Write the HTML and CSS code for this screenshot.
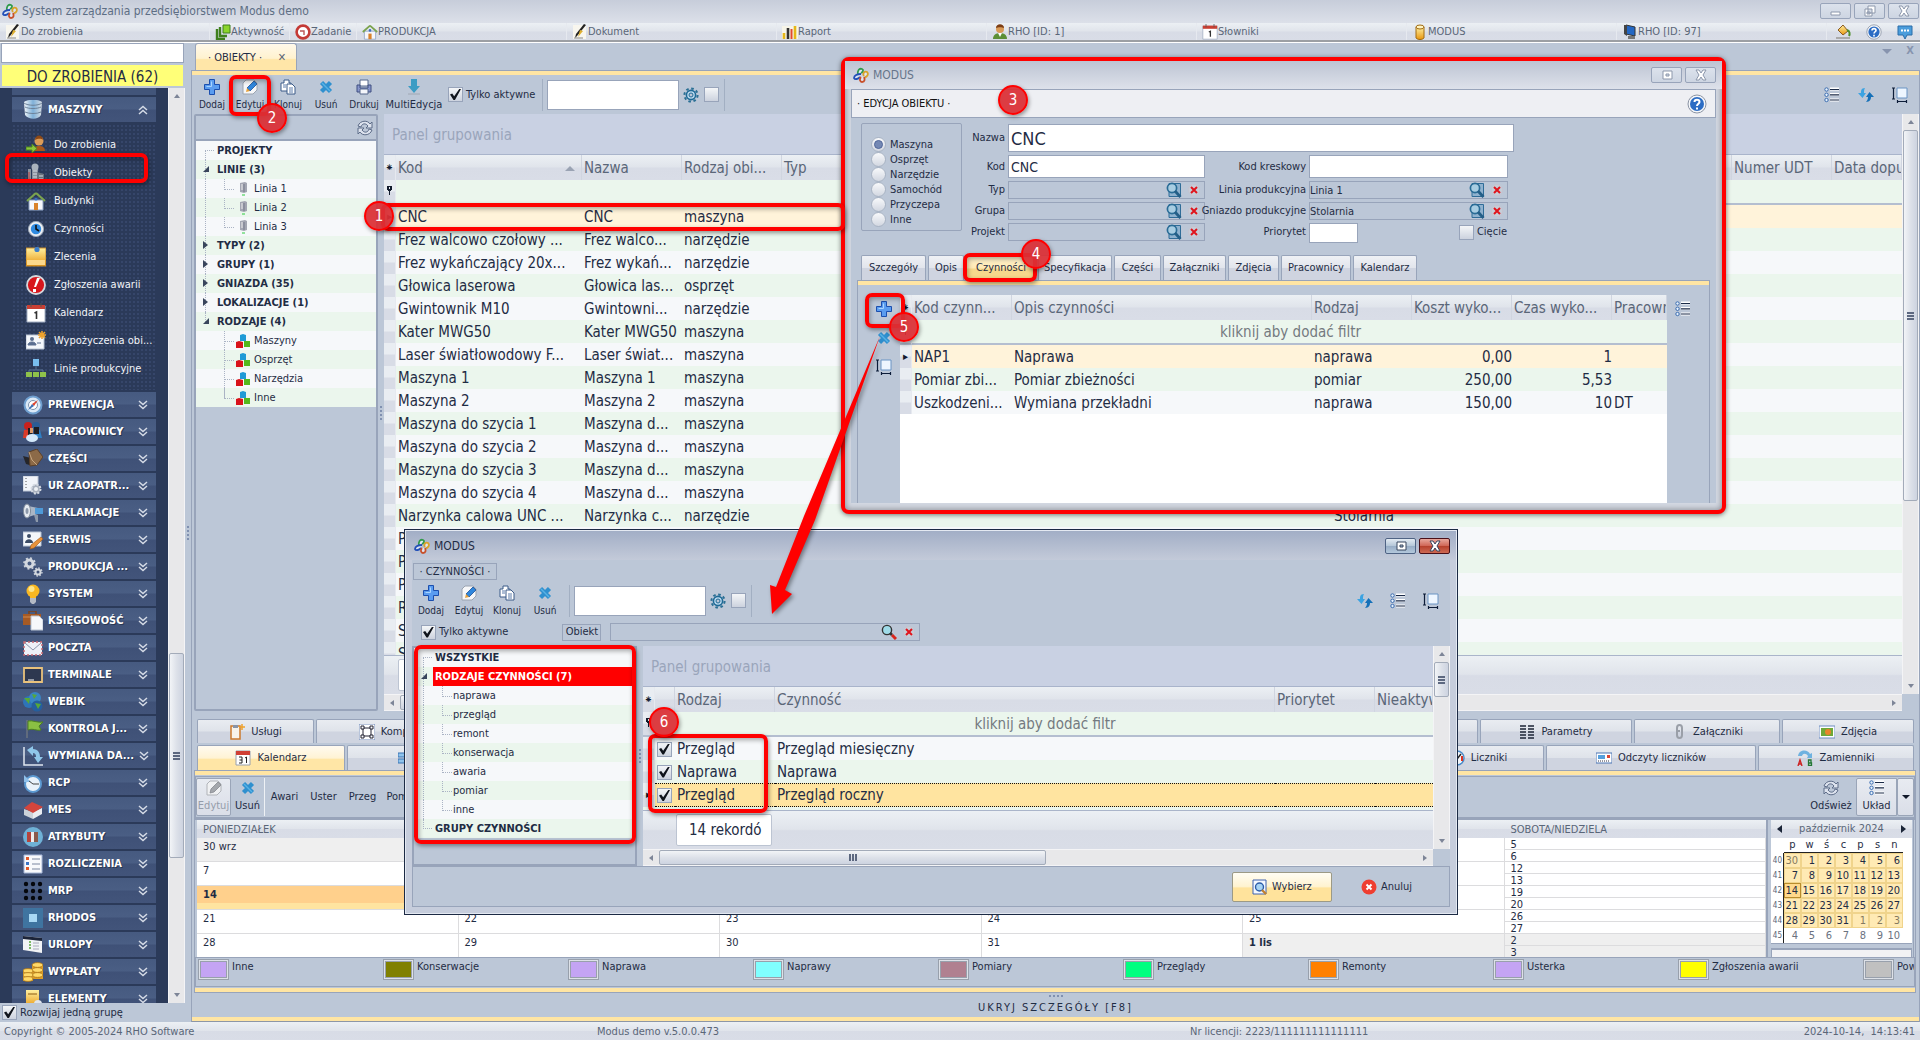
FILE: index.html
```html
<!DOCTYPE html>
<html lang="pl">
<head>
<meta charset="utf-8">
<title>System zarządzania przedsiębiorstwem Modus demo</title>
<link rel="stylesheet" href="styles.css">
</head>
<body>
<svg class="defs" aria-hidden="true">
  <defs>
    <linearGradient id="gSilver" x1="0" y1="0" x2="1" y2="1"><stop offset="0" stop-color="#fff"/><stop offset="1" stop-color="#b4bcc9"/></linearGradient>
    <linearGradient id="gGold" x1="0" y1="0" x2="0" y2="1"><stop offset="0" stop-color="#fff0a0"/><stop offset="1" stop-color="#e8960f"/></linearGradient>
    <linearGradient id="gTank" x1="0" y1="0" x2="1" y2="0"><stop offset="0" stop-color="#f2f6fa"/><stop offset=".5" stop-color="#7fb0d8"/><stop offset="1" stop-color="#d6dde4"/></linearGradient>
  </defs>
  <symbol id="logo" viewBox="0 0 16 16"><g fill="#dfe6f2" stroke-width="1.800"><path d="M5 8 C4 4 6 1 9 2 C11 3 10 5 8 6" stroke="#2f9a4a"/><path d="M11 9 C9 6 12 4 14 5 C16 7 14 10 12 10" stroke="#d9a32a"/><path d="M8 7 C5 7 1 8 1 11 C2 13 5 12 7 10" stroke="#2350b8"/><path d="M8 10 C6 12 7 15 9 15 C12 15 12 12 11 10" stroke="#c8502a"/></g></symbol>
  <symbol id="pen" viewBox="0 0 16 16"><path d="M1 1h13v14H1z" fill="#f8f6ee"/><path d="M14 1L5 12l-2 2 1-4L12 0z" fill="#222"/><path d="M8 6l3 1-5 6z" fill="#e0b030"/><path d="M2 14h9" stroke="#888"/></symbol>
  <symbol id="activity" viewBox="0 0 16 16"><path d="M2 5v10h8M5 3v9h7" fill="none" stroke="#3f7f1e" stroke-width="2.400"/><path d="M8 1h7v8H8z" fill="#8bd52c" stroke="#3f7f1e"/></symbol>
  <symbol id="task" viewBox="0 0 16 16"><circle cx="8" cy="8" r="6.400" fill="#fff" stroke="#c43a36" stroke-width="2.600"/><path d="M5 7h4v4" fill="none" stroke="#b55" stroke-width="1.400"/></symbol>
  <symbol id="house" viewBox="0 0 20 20"><path d="M3 9h14v10H3z" fill="#f6f7fb" stroke="#8fa3c4"/><path d="M10 2L1 10M10 2l9 8" stroke="#7ba34e" stroke-width="2.200" fill="none"/><path d="M8 12h4v7H8z" fill="#d9822b"/><circle cx="10" cy="8" r="1.600" fill="#3c6fc0"/></symbol>
  <symbol id="report" viewBox="0 0 16 16"><path d="M0 2h16v13H0z" fill="#f7f5e8"/><path d="M2 15V9M13 15V2" stroke="#e5b718" stroke-width="2.600"/><path d="M6 15V4" stroke="#333" stroke-width="2.600"/><path d="M9.500 15V5" stroke="#e2492f" stroke-width="2"/></symbol>
  <symbol id="user" viewBox="0 0 16 16"><circle cx="8" cy="5" r="4" fill="#d99a56"/><path d="M4 4c0-5 8-5 8 0-2-1-6-1-8 0z" fill="#7c3d14"/><path d="M1 15c0-4 3-6 7-6s7 2 7 6z" fill="#5c8f35"/><path d="M6 9l2 4 2-4z" fill="#fff"/></symbol>
  <symbol id="cal1" viewBox="0 0 20 20"><path d="M1 3h18v16H1z" fill="#fff" stroke="#a4b0c4"/><path d="M1 2h18v4H1z" fill="#c93f33"/><path d="M5 0v4M15 0v4" stroke="#555"/><path d="M8.500 10l2-1v7" stroke="#333" stroke-width="1.600" fill="none"/></symbol>
  <symbol id="db" viewBox="0 0 16 16"><path d="M4 3h8v11c-2 2-6 2-8 0z" fill="url(#gGold)" stroke="#a06a12"/><ellipse cx="8" cy="3" rx="4" ry="2" fill="#fff3c0" stroke="#a06a12"/></symbol>
  <symbol id="pc" viewBox="0 0 16 16"><path d="M4 1l9 2v9L4 10z" fill="#2367c4" stroke="#333"/><path d="M2 1l3 0v11l-3-2z" fill="#444"/><path d="M6 12h7v3H6z" fill="#777"/></symbol>
  <symbol id="paint" viewBox="0 0 16 16"><path d="M3 6l5-5 5 6-5 4z" fill="url(#gGold)" stroke="#8a5a20"/><path d="M12 6c3 1 3 4 2 6" stroke="#4f8f2c" stroke-width="2" fill="none"/><path d="M1 14h14" stroke="#aaa" stroke-width="2"/></symbol>
  <symbol id="help" viewBox="0 0 20 20"><circle cx="10" cy="10" r="9" fill="#f5f7fa" stroke="#8a93a3"/><circle cx="10" cy="10" r="7" fill="#2b6cc4"/><path d="M7.500 8c0-3 5-3 5 0 0 1.500-2.500 2-2.500 4M10 13.500v2" stroke="#fff" stroke-width="2" fill="none"/></symbol>
  <symbol id="chat" viewBox="0 0 16 16"><path d="M1 2h14v9h-5l-2 4-2-4H1z" fill="#4b9ddc" stroke="#2b6ca8"/><path d="M4 6.500h2M7 6.500h2M10 6.500h2" stroke="#fff" stroke-width="2"/></symbol>
  <symbol id="plus" viewBox="0 0 16 16"><path d="M5.500 .500h5v5h5v5h-5v5h-5v-5h-5v-5h5z" fill="#5a9cf0" stroke="#1c4fae"/><path d="M7.500 2.500v5H2.500" stroke="#a8d4ff" fill="none"/></symbol>
  <symbol id="edit" viewBox="0 0 16 16"><path d="M4 1h8l3 3v7l-4 4H1V4z" fill="#f6f7f9" stroke="#9aa3b0"/><path d="M12 2l3 3-7 7-3-3z" fill="#2f86dc" stroke="#1c4f94" stroke-width=".8"/><path d="M5 9l3 3-4 1z" fill="#e8a23a"/></symbol>
  <symbol id="editoff" viewBox="0 0 16 16"><path d="M4 1h8l3 3v7l-4 4H1V4z" fill="#f0f1f3" stroke="#b0b3b8"/><path d="M12 2l3 3-7 7-4 1 1-4z" fill="#a4a7ac" stroke="#85888e" stroke-width=".8"/></symbol>
  <symbol id="clone" viewBox="0 0 16 16"><path d="M1 4h3V1h5v3h2v8H1z" fill="#fff" stroke="#3a5a88"/><path d="M7 5h5l3 3v7H7z" fill="#fff" stroke="#3a5a88"/><path d="M9 9h4M9 11h4M9 13h4M3 6h3M3 8h3" stroke="#5c7cab"/></symbol>
  <symbol id="del" viewBox="0 0 16 16"><path d="M3.500 3.500l9 9M12.500 3.500l-9 9" stroke="#2f90cf" stroke-width="4.400"/><path d="M4 4l8 8" stroke="#58b2e6" stroke-width="1.500"/></symbol>
  <symbol id="print" viewBox="0 0 16 16"><path d="M4 1h8v6H4z" fill="#fff" stroke="#56688c"/><path d="M1 6h3v3h8V6h3v7H1z" fill="#8796cc" stroke="#3e4f80"/><path d="M4 10h8v5H4z" fill="#f4f6fb" stroke="#56688c"/></symbol>
  <symbol id="down" viewBox="0 0 16 16"><path d="M5 0h6v7h3l-6 7-6-7h3z" fill="#3c9cc4"/><path d="M2 15h12" stroke="#a0a8b4"/></symbol>
  <symbol id="gear" viewBox="0 0 16 16"><circle cx="8" cy="8" r="6.600" fill="none" stroke="#2a6f94" stroke-width="2" stroke-dasharray="2.600 2.580"/><circle cx="8" cy="8" r="4.600" fill="#bbd9ee" stroke="#1f6a96" stroke-width="1.600"/><circle cx="8" cy="8" r="2" fill="#bcc7d7" stroke="#1f6a96"/></symbol>
  <symbol id="list" viewBox="0 0 16 16"><path d="M6 2h9M6 7.500h9M6 13h9" stroke="#fff" stroke-width="3"/><g fill="#e8f2fc" stroke="#3a6cb0"><circle cx="2.500" cy="2.500" r="1.700"/><circle cx="2.500" cy="7.800" r="1.700"/><circle cx="2.500" cy="13" r="1.700"/></g><path d="M6 2.500h9M6 7.800h9M6 13h9" stroke="#1b2b48" stroke-width="1.200"/></symbol>
  <symbol id="sync" viewBox="0 0 16 16"><path d="M7 1C3 1 3 4 3 6H0l4.500 5L8 6H6c0-2 0-3 1-5z" fill="#3ba3e2"/><path d="M8 15c4 0 5-3 5-5h3l-4.500-5L8 10h2c0 2-1 4-2 5z" fill="#1570b8"/></symbol>
  <symbol id="size" viewBox="0 0 16 16"><path d="M5 1h10v10H5z" fill="#eef6ff" stroke="#6a94c4"/><path d="M0 1h3M1.500 1v11M0 12h3M5 14.500h10M5.500 13v3M14.500 13v3" stroke="#0c1c38" stroke-width="1.200"/></symbol>
  <symbol id="refresh" viewBox="0 0 16 16"><path d="M1 6c2-6 10-6 12-2l2-2v6H9l2-2C9 3 5 3 4 7z" fill="#dde3ee" stroke="#5d6c88"/><path d="M15 10c-2 6-10 6-12 2l-2 2V8h6l-2 2c2 3 6 3 7-1z" fill="#dde3ee" stroke="#5d6c88"/></symbol>
  <symbol id="lens" viewBox="0 0 16 16"><path d="M3 1.500h11.500v13H3z" fill="#8fb2cf" stroke="#2f6c98"/><circle cx="6" cy="6" r="4.600" fill="#a8cde2" stroke="#2a6c96" stroke-width="1.700"/><path d="M9 9l5.500 6" stroke="#245f88" stroke-width="2.800"/></symbol>
  <symbol id="lensred" viewBox="0 0 16 16"><circle cx="6" cy="6" r="4.600" fill="#9fdbe8" stroke="#333" stroke-width="1.400"/><path d="M9 9l2 2" stroke="#333" stroke-width="2.600"/><path d="M11 11l4 4" stroke="#d9261c" stroke-width="3"/></symbol>
  <symbol id="redx" viewBox="0 0 12 12"><circle cx="6" cy="6" r="5.500" fill="#c6ced9" stroke="#c9c0c8" stroke-width=".6"/><path d="M3 3l6 6M9 3L3 9" stroke="#e0141c" stroke-width="2"/></symbol>
  <symbol id="tower" viewBox="0 0 12 14"><path d="M3 1l5-1 2 1v9l-3 1-4-1z" fill="#a3a6b2"/><path d="M7 2v8" stroke="#74788a"/><path d="M4 3h2M4 5h2M4 7h2" stroke="#eee"/><path d="M5 13h3" stroke="#2ecc40"/></symbol>
  <symbol id="cubes" viewBox="0 0 14 14"><path d="M4 1l3-1 3 1v6H4z" fill="#1f9ad6"/><path d="M0 8l3-1 4 1v6H0z" fill="#d9121a"/><path d="M8 7h6v6H8z" fill="#55b81c"/></symbol>
  <symbol id="chevd" viewBox="0 0 10 10"><path d="M1 1l4 3.500L9 1M1 5l4 3.500L9 5" fill="none" stroke="#d5dbe6" stroke-width="1.500"/></symbol>
  <symbol id="chevu" viewBox="0 0 10 10"><path d="M1 5l4-3.500L9 5M1 9l4-3.500L9 9" fill="none" stroke="#d5dbe6" stroke-width="1.500"/></symbol>

  <symbol id="tank" viewBox="0 0 20 20"><path d="M1 2c4-3 14-3 18 0l-1 13c-3 5-12 5-16 0z" fill="url(#gTank)"/><path d="M1 3c4 3 14 3 18 0M2 7c4 2 12 2 16 0M2 12c4 2 12 2 16 0" stroke="#6d8299" fill="none"/></symbol>
  <symbol id="userarrow" viewBox="0 0 20 20"><circle cx="13" cy="6" r="4.500" fill="#dc9c58"/><path d="M9 5c0-6 8-6 8 0-2-2-6-1-8 0z" fill="#8c4816"/><path d="M7 16c0-4 3-5 6-5s6 1 6 5z" fill="#a8581c"/><path d="M0 12h6V9l5 4.500-5 4.500v-3H0z" fill="#8cc63c" stroke="#4f8a1e"/></symbol>
  <symbol id="plant" viewBox="0 0 20 20"><path d="M2 6h3v12H2zM6 3h6v15H6z" fill="#8b939e"/><path d="M11 9l7 2v7h-7z" fill="#6a737e"/><circle cx="9" cy="4" r="3.500" fill="#aab3bd"/><path d="M7 8h4M7 11h4M7 14h4M13 13h4M13 16h4" stroke="#d6dde6"/><path d="M3 9v8" stroke="#b44"/></symbol>
  <symbol id="clock" viewBox="0 0 20 20"><circle cx="10" cy="10" r="7.600" fill="#e9edf2" stroke="#9aa5b4"/><circle cx="10" cy="10" r="5.200" fill="#2e8ae0"/><path d="M10 6v4l3 2" stroke="#111" stroke-width="1.600" fill="none"/></symbol>
  <symbol id="note" viewBox="0 0 20 20"><path d="M0 1h20v18H0z" fill="url(#gGold)" stroke="#c58a2c"/><path d="M1 13h18v5H1z" fill="#fbd88c"/><circle cx="11" cy="2.500" r="2.600" fill="#3f7fc8"/></symbol>
  <symbol id="alarm" viewBox="0 0 20 20"><circle cx="10" cy="10" r="9" fill="#d8161c" stroke="#d5d8dd" stroke-width="1.800"/><path d="M11 3l3 0-4 9H8zM7 14h3v3H7z" fill="#fff"/></symbol>
  <symbol id="card" viewBox="0 0 20 20"><path d="M0 4h18v14H0z" fill="#f4f7fb" stroke="#b9c4d4"/><circle cx="6" cy="8" r="2" fill="#5b6f90"/><path d="M2 14c0-4 8-4 8 0zM11 12h4" fill="#5b6f90" stroke="#5b6f90"/><path d="M16 0v8M12 4h8M13 1l6 6M19 1l-6 6" stroke="#eea22c" stroke-width="1.600"/></symbol>
  <symbol id="orgline" viewBox="0 0 20 20"><path d="M7 0h6v7H7z" fill="#79bff0"/><path d="M10 7v4M3 13v-2h14v2" stroke="#5a7596" fill="none"/><path d="M0 13h6v5H0zM7 13h6v5H7zM14 13h6v5h-6z" fill="#8fc24a"/></symbol>
  <symbol id="compass" viewBox="0 0 20 20"><circle cx="10" cy="10" r="8.500" fill="#dbe9f7" stroke="#6f9fcf" stroke-width="2"/><circle cx="10" cy="10" r="4.500" fill="#fff" stroke="#7d93ae"/><path d="M15 5l-4 6-2-2z" fill="#e2432b"/><path d="M5 15l4-6 2 2z" fill="#3a6fb4"/></symbol>
  <symbol id="people" viewBox="0 0 20 20"><circle cx="5" cy="4" r="4" fill="#c8201c"/><circle cx="13" cy="4" r="4" fill="#2b5c94"/><path d="M1 8h7v8H0z" fill="#d93a28"/><path d="M11 8h6l2 8h-8z" fill="#2f7fc4"/><path d="M5 6h4v7H5zM11 5h5v7h-5z" fill="#1c1c20"/><path d="M7 6h3v5H7z" fill="#d99a6a"/><ellipse cx="9" cy="16" rx="6" ry="4" fill="#d4e9fa"/></symbol>
  <symbol id="box" viewBox="0 0 20 20"><path d="M0 7l8 2 2 8-7-2z" fill="#26262a"/><path d="M6 3l8-3 6 8-6 8-7 1z" fill="#8c6a48" stroke="#5d4128"/><path d="M6 3l3 8 5 5" stroke="#c5a580" fill="none"/></symbol>
  <symbol id="docgear" viewBox="0 0 20 20"><path d="M0 0h15v15H0z" fill="#f1f4f9" stroke="#bdc6d5"/><path d="M3 2v10" stroke="#555" stroke-dasharray="1 2"/><circle cx="13" cy="13" r="4.500" fill="#a9b1be" stroke="#d5dae2" stroke-width="2" stroke-dasharray="2 1.500"/><circle cx="13" cy="13" r="2" fill="#eef1f5"/></symbol>
  <symbol id="horn" viewBox="0 0 20 20"><path d="M5 3l10 2v6L5 14z" fill="#aab6c5"/><ellipse cx="4" cy="8" rx="3.500" ry="7" fill="#e6ebf1" stroke="#7f8a99"/><ellipse cx="4" cy="8" rx="1.500" ry="3" fill="#8d99aa"/><path d="M12 5h8v6h-8z" fill="#4e9ad8"/><path d="M11 12h4v7h-2z" fill="#8d99aa"/></symbol>
  <symbol id="cardpen" viewBox="0 0 20 20"><path d="M0 2h18v14H0z" fill="#f4f7fb" stroke="#b9c4d4"/><circle cx="6" cy="6" r="2" fill="#3c4c66"/><path d="M2 13c0-5 8-5 8 0z" fill="#3c4c66"/><path d="M18 7l2 2-9 9-4 1 1-4z" fill="#e8923a" stroke="#9a5518" stroke-width=".6"/></symbol>
  <symbol id="gears" viewBox="0 0 20 20"><circle cx="6.500" cy="6.500" r="3.500" fill="none" stroke="#d3d8df" stroke-width="3"/><circle cx="6.500" cy="6.500" r="5.500" fill="none" stroke="#d3d8df" stroke-width="1.600" stroke-dasharray="2 2.300"/><circle cx="15" cy="15" r="2.500" fill="none" stroke="#d3d8df" stroke-width="2"/><circle cx="15" cy="15" r="4" fill="none" stroke="#d3d8df" stroke-width="1.300" stroke-dasharray="1.600 1.500"/></symbol>
  <symbol id="bulb" viewBox="0 0 20 20"><circle cx="10" cy="7" r="6.500" fill="#f9b822"/><circle cx="8.500" cy="5" r="3" fill="#fde58a"/><path d="M7 12h6v2H7z" fill="#f9b822"/><path d="M7 14h6v4l-2 2H9l-2-2z" fill="#b4bac4"/></symbol>
  <symbol id="case" viewBox="0 0 20 20"><path d="M6 3V0h7v3" stroke="#7c431c" fill="none" stroke-width="1.500"/><path d="M0 3h18v11H0z" fill="#a65a24"/><path d="M0 6h18" stroke="#d08a4c"/><path d="M8 5h8l4 4v10H8z" fill="#f6f8fb" stroke="#b9c3d1"/></symbol>
  <symbol id="mail" viewBox="0 0 20 20"><path d="M1 4h18v13H1z" fill="#eef1f8" stroke="#c86a72" stroke-width="1.500" stroke-dasharray="2 2"/><path d="M2 5l8 7 8-7" fill="none" stroke="#8c96ac"/></symbol>
  <symbol id="board" viewBox="0 0 20 20"><path d="M1 3h18v14H1z" fill="#2e3850" stroke="#e9c27c" stroke-width="1.800"/><path d="M5 15h6" stroke="#fff"/></symbol>
  <symbol id="globes" viewBox="0 0 20 20"><circle cx="6" cy="10" r="6" fill="#2e74b8"/><circle cx="12" cy="6" r="6" fill="#3a86c4"/><circle cx="14" cy="14" r="5.500" fill="#255f9e"/><path d="M1 6l6 0-1 6zM9 2l5 1-3 4zM12 11l6 1-3 5z" fill="#56a83a"/></symbol>
  <symbol id="flag" viewBox="0 0 20 20"><path d="M4 1v18" stroke="#6c757f" stroke-width="1.500"/><path d="M5 2c5-1 9 2 15 1l-4 4 2 4c-5 1-8-2-13 0z" fill="#8ac043" stroke="#4c8020"/></symbol>
  <symbol id="swap" viewBox="0 0 20 20"><path d="M1 1v18h19" stroke="#dfe6ef" fill="none" stroke-width="1.500"/><path d="M4 4l6-4v3c5 0 7 4 7 8h3l-5 6-4-6h2c0-3-1-4-3-4v3z" fill="#8fc7ea"/></symbol>
  <symbol id="rcp" viewBox="0 0 20 20"><circle cx="10" cy="11" r="8" fill="#eaf2fa" stroke="#5c9ad2" stroke-width="2"/><path d="M1 2v7h7z" fill="#8fc0ea"/><path d="M10 11h6M10 11L6 8" stroke="#444"/></symbol>
  <symbol id="factory" viewBox="0 0 20 20"><path d="M1 9l9 3v7l-9-4z" fill="#ccd2da"/><path d="M10 12l9-4v6l-9 5z" fill="#e9ecf1"/><path d="M1 8l8-6 11 5-10 6z" fill="#d4453c"/></symbol>
  <symbol id="books" viewBox="0 0 20 20"><circle cx="10" cy="10" r="10" fill="#6fb1d6"/><path d="M4 5h4v10H4z" fill="#b5443c"/><path d="M8 5h3v10H8z" fill="#eee"/><path d="M11 5h4v10h-4z" fill="#8a5a4c"/></symbol>
  <symbol id="bill" viewBox="0 0 20 20"><path d="M1 1h18v18H1z" fill="#f8f9fc" stroke="#a8b8d8"/><path d="M3 3h3v3H3z" fill="#e0592b"/><path d="M3 8h3v3H3z" fill="#3a74c4"/><path d="M3 13h3v3H3z" fill="#e0592b"/><path d="M9 5h8M9 10h8M9 15h8" stroke="#7a86a0"/></symbol>
  <symbol id="dots" viewBox="0 0 20 20"><g fill="#05070c"><circle cx="3" cy="3" r="2.200"/><circle cx="10" cy="3" r="2.200"/><circle cx="17" cy="3" r="2.200"/><circle cx="3" cy="10" r="2.200"/><circle cx="10" cy="10" r="2.200"/><circle cx="17" cy="10" r="2.200"/><circle cx="3" cy="17" r="2.200"/><circle cx="10" cy="17" r="2.200"/><circle cx="17" cy="17" r="2.200"/></g></symbol>
  <symbol id="rhodos" viewBox="0 0 20 20"><path d="M0 0h20v20H0z" fill="#3f74a0"/><path d="M6 6h8v8H6z" fill="#a8d8f4"/></symbol>
  <symbol id="sheet" viewBox="0 0 20 20"><path d="M0 1l19 2v15l-19-3z" fill="#f1f3f6"/><path d="M0 1l19 2v3L0 4z" fill="#1c2438"/><path d="M6 7h2M6 10h2M6 13h2" stroke="#5aa83a" stroke-width="1.500"/><path d="M10 8h6M10 11h6M10 14h6" stroke="#aab"/></symbol>
  <symbol id="coins" viewBox="0 0 20 20"><path d="M9 3h11v14H9zM0 8h10v11H0z" fill="#dd9d28"/><g fill="#ffd968" stroke="#a86e12" stroke-width=".8"><ellipse cx="14.500" cy="3" rx="5.500" ry="2.400"/><ellipse cx="14.500" cy="8" rx="5.500" ry="2.400"/><ellipse cx="14.500" cy="13" rx="5.500" ry="2.400"/><ellipse cx="5" cy="9" rx="5" ry="2.400"/><ellipse cx="5" cy="13" rx="5" ry="2.400"/><ellipse cx="5" cy="17" rx="5" ry="2.400"/></g></symbol>
  <symbol id="element" viewBox="0 0 20 20"><path d="M3 1h13v18H3z" fill="url(#gGold)"/><path d="M5 5h9" stroke="#8a5a12"/><circle cx="15" cy="15" r="4" fill="#dfe4ec"/></symbol>

  <symbol id="clip" viewBox="0 0 16 16"><path d="M2 2h9v13H2z" fill="#f8f3ea" stroke="#cc7a2c" stroke-width="1.500"/><path d="M4 1h5v3H4z" fill="#8a94a6"/><path d="M13 0v6M10 3h6" stroke="#eea22c" stroke-width="1.500"/></symbol>
  <symbol id="comp" viewBox="0 0 16 16"><path d="M0 0h16v16H0z" fill="#fff" stroke="#7189b8"/><path d="M4 4h8v8H4z" fill="none" stroke="#223"/><path d="M2 2h3v3H2zM11 2h3v3h-3zM2 11h3v3H2zM11 11h3v3h-3z" fill="#fff" stroke="#223"/></symbol>
  <symbol id="cal31" viewBox="0 0 16 16"><path d="M1 1h14v14H1z" fill="#fff" stroke="#97a0b0"/><path d="M1 1h14v4H1z" fill="#cf3f34"/><path d="M4 7h3v6H4M4.500 10H7M10 8l1.500-1v6" stroke="#222" fill="none"/></symbol>
  <symbol id="tiles" viewBox="0 0 16 16"><path d="M0 3h7v4H0zM9 3h7v4H9zM0 9h7v4H0zM9 9h7v4H9z" fill="#8fc3ec" stroke="#3a74b4"/></symbol>
  <symbol id="params" viewBox="0 0 16 16"><path d="M1 2h6M1 5h6M1 8h6M1 11h6M1 14h6M9 2h6M9 5h6M9 8h6M9 11h6M9 14h6" stroke="#1c2436" stroke-width="1.500"/></symbol>
  <symbol id="attach" viewBox="0 0 16 16"><path d="M6 9V4c0-4 5-4 5 0v7c0 4-5 4-5 0V7h3" fill="none" stroke="#9a9fa8" stroke-width="2"/></symbol>
  <symbol id="photo" viewBox="0 0 16 16"><path d="M0 2h16v12H0z" fill="#fff" stroke="#6c8cc0"/><path d="M2 4h12v8H2z" fill="#6fa838"/><circle cx="9" cy="8" r="3" fill="#e8842c"/></symbol>
  <symbol id="meter" viewBox="0 0 16 16"><circle cx="8" cy="8" r="7" fill="#f2f6fb" stroke="#4a8ac8" stroke-width="1.500"/><path d="M8 9l4-5" stroke="#222" stroke-width="1.500"/><path d="M13 6v5" stroke="#dd3322" stroke-width="2"/></symbol>
  <symbol id="read" viewBox="0 0 16 16"><path d="M0 3h16v10H0z" fill="#fff" stroke="#4a74b4"/><path d="M2 5h7v4H2z" fill="#58a0dc"/><path d="M11 5h3v3h-3z" fill="#dd4433"/><path d="M2 11h12" stroke="#334" stroke-dasharray="1 1"/></symbol>
  <symbol id="ab" viewBox="0 0 16 16"><path d="M1 6c1-7 10-7 12-2l2-1v5h-5l1-2C9 3 6 3 5 6z" fill="#6fb2e0"/><path d="M1 16l2-6 2 6M1.500 14h3" stroke="#c22" stroke-width="1.400" fill="none"/><path d="M11.500 10v5.500h3v-2.500h-3 2.500V10z" stroke="#273" stroke-width="1.300" fill="none"/></symbol>
  <symbol id="pick" viewBox="0 0 16 16"><path d="M1 1h13v14H1z" fill="#f4f8ff" stroke="#3f62b0"/><circle cx="7.500" cy="8" r="4" fill="#a8d4f4" stroke="#2c5ca8" stroke-width="1.400"/><path d="M10 11l4 4" stroke="#c08030" stroke-width="2.400"/></symbol>
  <symbol id="cancel" viewBox="0 0 16 16"><circle cx="8" cy="8" r="7.500" fill="#ef3e30"/><path d="M5.500 5.500l5 5M10.500 5.500l-5 5" stroke="#fff" stroke-width="2"/></symbol>
</svg>

<header class="titlebar">
  <svg class="i16"><use href="#logo"/></svg><h1>System zarządzania przedsiębiorstwem Modus demo</h1>
  <div class="winbtns off">
    <button type="button" aria-label="Minimalizuj"><svg viewBox="0 0 16 12"><path d="M3 7h9v3H3z"/></svg></button>
    <button type="button" aria-label="Przywróć"><svg viewBox="0 0 16 12"><path d="M6 1h7v7H6zM3 4h7v7H3zM5 7h3v2H5z"/></svg></button>
    <button type="button" aria-label="Zamknij"><svg viewBox="0 0 16 12"><path d="M3 1h3l2 3 2-3h3l-3 5 3 5h-3l-2-3-2 3H3l3-5z"/></svg></button>
  </div>
</header>

<nav class="menubar" aria-label="Pasek skrótów">
  <a href="#"><svg class="i16"><use href="#pen"/></svg>Do zrobienia</a>
  <a href="#"><svg class="i16"><use href="#activity"/></svg>Aktywność</a>
  <a href="#"><svg class="i16"><use href="#task"/></svg>Zadanie</a>
  <a href="#"><svg class="i16"><use href="#house"/></svg>PRODUKCJA</a>
  <a href="#"><svg class="i16"><use href="#pen"/></svg>Dokument</a>
  <a href="#"><svg class="i16"><use href="#report"/></svg>Raport</a>
  <a href="#"><svg class="i16"><use href="#user"/></svg>RHO [ID: 1]</a>
  <a href="#"><svg class="i16"><use href="#cal1"/></svg>Słowniki</a>
  <a href="#"><svg class="i16"><use href="#db"/></svg>MODUS</a>
  <a href="#"><svg class="i16"><use href="#pc"/></svg>RHO [ID: 97]</a>
  <span class="menuicons"><svg class="i16"><use href="#paint"/></svg><svg class="i16"><use href="#help"/></svg><svg class="i16"><use href="#chat"/></svg></span>
</nav>

<div class="app">
  <aside class="sidebar">
    <input class="sidesearch" type="text" aria-label="Szukaj w menu">
    <div class="todo">DO ZROBIENIA (62)</div>
    <div class="navwrap">
      <nav class="nav" aria-label="Moduły">
        <div class="navcut"></div>
        <a class="navhead" href="#"><svg class="i20"><use href="#tank"/></svg>MASZYNY<svg class="chev"><use href="#chevu"/></svg></a>
        <div class="navbody">
          <a href="#"><svg class="i20"><use href="#userarrow"/></svg>Do zrobienia</a>
          <a href="#"><svg class="i20"><use href="#plant"/></svg>Obiekty</a>
          <a href="#"><svg class="i20"><use href="#house"/></svg>Budynki</a>
          <a href="#"><svg class="i20"><use href="#clock"/></svg>Czynności</a>
          <a href="#"><svg class="i20"><use href="#note"/></svg>Zlecenia</a>
          <a href="#"><svg class="i20"><use href="#alarm"/></svg>Zgłoszenia awarii</a>
          <a href="#"><svg class="i20"><use href="#cal1"/></svg>Kalendarz</a>
          <a href="#"><svg class="i20"><use href="#card"/></svg>Wypożyczenia obi...</a>
          <a href="#"><svg class="i20"><use href="#orgline"/></svg>Linie produkcyjne</a>
        </div>
        <a class="navhead" href="#"><svg class="i20"><use href="#compass"/></svg>PREWENCJA<svg class="chev"><use href="#chevd"/></svg></a>
        <a class="navhead" href="#"><svg class="i20"><use href="#people"/></svg>PRACOWNICY<svg class="chev"><use href="#chevd"/></svg></a>
        <a class="navhead" href="#"><svg class="i20"><use href="#box"/></svg>CZĘŚCI<svg class="chev"><use href="#chevd"/></svg></a>
        <a class="navhead" href="#"><svg class="i20"><use href="#docgear"/></svg>UR ZAOPATR...<svg class="chev"><use href="#chevd"/></svg></a>
        <a class="navhead" href="#"><svg class="i20"><use href="#horn"/></svg>REKLAMACJE<svg class="chev"><use href="#chevd"/></svg></a>
        <a class="navhead" href="#"><svg class="i20"><use href="#cardpen"/></svg>SERWIS<svg class="chev"><use href="#chevd"/></svg></a>
        <a class="navhead" href="#"><svg class="i20"><use href="#gears"/></svg>PRODUKCJA ...<svg class="chev"><use href="#chevd"/></svg></a>
        <a class="navhead" href="#"><svg class="i20"><use href="#bulb"/></svg>SYSTEM<svg class="chev"><use href="#chevd"/></svg></a>
        <a class="navhead" href="#"><svg class="i20"><use href="#case"/></svg>KSIĘGOWOŚĆ<svg class="chev"><use href="#chevd"/></svg></a>
        <a class="navhead" href="#"><svg class="i20"><use href="#mail"/></svg>POCZTA<svg class="chev"><use href="#chevd"/></svg></a>
        <a class="navhead" href="#"><svg class="i20"><use href="#board"/></svg>TERMINALE<svg class="chev"><use href="#chevd"/></svg></a>
        <a class="navhead" href="#"><svg class="i20"><use href="#globes"/></svg>WEBIK<svg class="chev"><use href="#chevd"/></svg></a>
        <a class="navhead" href="#"><svg class="i20"><use href="#flag"/></svg>KONTROLA J...<svg class="chev"><use href="#chevd"/></svg></a>
        <a class="navhead" href="#"><svg class="i20"><use href="#swap"/></svg>WYMIANA DA...<svg class="chev"><use href="#chevd"/></svg></a>
        <a class="navhead" href="#"><svg class="i20"><use href="#rcp"/></svg>RCP<svg class="chev"><use href="#chevd"/></svg></a>
        <a class="navhead" href="#"><svg class="i20"><use href="#factory"/></svg>MES<svg class="chev"><use href="#chevd"/></svg></a>
        <a class="navhead" href="#"><svg class="i20"><use href="#books"/></svg>ATRYBUTY<svg class="chev"><use href="#chevd"/></svg></a>
        <a class="navhead" href="#"><svg class="i20"><use href="#bill"/></svg>ROZLICZENIA<svg class="chev"><use href="#chevd"/></svg></a>
        <a class="navhead" href="#"><svg class="i20"><use href="#dots"/></svg>MRP<svg class="chev"><use href="#chevd"/></svg></a>
        <a class="navhead" href="#"><svg class="i20"><use href="#rhodos"/></svg>RHODOS<svg class="chev"><use href="#chevd"/></svg></a>
        <a class="navhead" href="#"><svg class="i20"><use href="#sheet"/></svg>URLOPY<svg class="chev"><use href="#chevd"/></svg></a>
        <a class="navhead" href="#"><svg class="i20"><use href="#coins"/></svg>WYPŁATY<svg class="chev"><use href="#chevd"/></svg></a>
        <a class="navhead" href="#"><svg class="i20"><use href="#element"/></svg>ELEMENTY<svg class="chev"><use href="#chevd"/></svg></a>
      </nav>
      <div class="vsb nav-sb"><i class="up"></i><span class="track"><b></b></span><i class="dn"></i></div>
    </div>
    <label class="chk sidechk"><input type="checkbox" checked>Rozwijaj jedną grupę</label>
  </aside>
  <div class="splitv"></div>

  <main class="main">
    <div class="doctabs"><a class="doctab" href="#">· OBIEKTY · <b>✕</b></a><span class="docctl"><i class="tri-dn"></i><b>X</b></span></div>
    <div class="doc">
      <div class="toolbar">
        <button class="tb" type="button"><svg class="i16"><use href="#plus"/></svg>Dodaj</button>
        <button class="tb" type="button"><svg class="i16"><use href="#edit"/></svg>Edytuj</button>
        <button class="tb" type="button"><svg class="i16"><use href="#clone"/></svg>Klonuj</button>
        <button class="tb" type="button"><svg class="i16"><use href="#del"/></svg>Usuń</button>
        <button class="tb" type="button"><svg class="i16"><use href="#print"/></svg>Drukuj</button>
        <button class="tb wide" type="button"><svg class="i16"><use href="#down"/></svg>MultiEdycja</button>
        <label class="chk"><input type="checkbox" checked>Tylko aktywne</label>
        <span class="sep"></span>
        <input class="find" type="text" aria-label="Szukaj">
        <svg class="i16"><use href="#gear"/></svg>
        <input class="box" type="checkbox" aria-label="Szukanie zaawansowane">
        <span class="sep"></span>
        <span class="tbright"><svg class="i16"><use href="#list"/></svg><svg class="i16"><use href="#sync"/></svg><svg class="i16"><use href="#size"/></svg></span>
      </div>

      <div class="work">
        <section class="treepanel">
          <div class="treehead"><svg class="i16"><use href="#refresh"/></svg></div>
          <ul class="tree">
            <li class="root">PROJEKTY</li>
            <li class="root open">LINIE (3)</li>
            <li class="kid"><svg class="i14"><use href="#tower"/></svg>Linia 1</li>
            <li class="kid"><svg class="i14"><use href="#tower"/></svg>Linia 2</li>
            <li class="kid last"><svg class="i14"><use href="#tower"/></svg>Linia 3</li>
            <li class="root shut">TYPY (2)</li>
            <li class="root shut">GRUPY (1)</li>
            <li class="root shut">GNIAZDA (35)</li>
            <li class="root shut">LOKALIZACJE (1)</li>
            <li class="root open end">RODZAJE (4)</li>
            <li class="kid solo"><svg class="i14"><use href="#cubes"/></svg>Maszyny</li>
            <li class="kid solo"><svg class="i14"><use href="#cubes"/></svg>Osprzęt</li>
            <li class="kid solo"><svg class="i14"><use href="#cubes"/></svg>Narzędzia</li>
            <li class="kid solo last"><svg class="i14"><use href="#cubes"/></svg>Inne</li>
          </ul>
        </section>
        <div class="splitv inner"></div>
        <section class="gridbox">
          <div class="gridcol">
            <div class="grouppanel">Panel grupowania</div>
            <div class="gridclip">
              <table class="grid">
                <colgroup><col class="c-ind"><col class="c-kod"><col class="c-100"><col class="c-100"><col><col class="c-400"><col class="c-100"><col class="c-70"></colgroup>
                <thead>
                  <tr><th class="ind">⁕</th><th>Kod<i class="sort"></i></th><th>Nazwa</th><th>Rodzaj obi...</th><th>Typ</th><th></th><th>Numer UDT</th><th>Data dopu</th></tr>
                  <tr class="filter"><td class="ind"><i class="pin"></i></td><td></td><td></td><td></td><td></td><td></td><td></td><td></td></tr>
                </thead>
                <tbody>
                  <tr class="sel"><td class="ind">▸</td><td>CNC</td><td>CNC</td><td>maszyna</td><td></td><td></td><td></td><td></td></tr>
                  <tr><td class="ind"></td><td>Frez walcowo czołowy ...</td><td>Frez walco...</td><td>narzędzie</td><td></td><td></td><td></td><td></td></tr>
                  <tr><td class="ind"></td><td>Frez wykańczający 20x...</td><td>Frez wykań...</td><td>narzędzie</td><td></td><td></td><td></td><td></td></tr>
                  <tr><td class="ind"></td><td>Głowica laserowa</td><td>Głowica las...</td><td>osprzęt</td><td></td><td></td><td></td><td></td></tr>
                  <tr><td class="ind"></td><td>Gwintownik M10</td><td>Gwintowni...</td><td>narzędzie</td><td></td><td></td><td></td><td></td></tr>
                  <tr><td class="ind"></td><td>Kater MWG50</td><td>Kater MWG50</td><td>maszyna</td><td></td><td></td><td></td><td></td></tr>
                  <tr><td class="ind"></td><td>Laser światłowodowy F...</td><td>Laser świat...</td><td>maszyna</td><td></td><td></td><td></td><td></td></tr>
                  <tr><td class="ind"></td><td>Maszyna 1</td><td>Maszyna 1</td><td>maszyna</td><td></td><td></td><td></td><td></td></tr>
                  <tr><td class="ind"></td><td>Maszyna 2</td><td>Maszyna 2</td><td>maszyna</td><td></td><td></td><td></td><td></td></tr>
                  <tr><td class="ind"></td><td>Maszyna do szycia 1</td><td>Maszyna d...</td><td>maszyna</td><td></td><td></td><td></td><td></td></tr>
                  <tr><td class="ind"></td><td>Maszyna do szycia 2</td><td>Maszyna d...</td><td>maszyna</td><td></td><td></td><td></td><td></td></tr>
                  <tr><td class="ind"></td><td>Maszyna do szycia 3</td><td>Maszyna d...</td><td>maszyna</td><td></td><td></td><td></td><td></td></tr>
                  <tr><td class="ind"></td><td>Maszyna do szycia 4</td><td>Maszyna d...</td><td>maszyna</td><td></td><td></td><td></td><td></td></tr>
                  <tr><td class="ind"></td><td>Narzynka calowa UNC ...</td><td>Narzynka c...</td><td>narzędzie</td><td></td><td>Stolarnia</td><td></td><td></td></tr>
                  <tr><td class="ind"></td><td>P</td><td></td><td></td><td></td><td></td><td></td><td></td></tr>
                  <tr><td class="ind"></td><td>P</td><td></td><td></td><td></td><td></td><td></td><td></td></tr>
                  <tr><td class="ind"></td><td>P</td><td></td><td></td><td></td><td></td><td></td><td></td></tr>
                  <tr><td class="ind"></td><td>R</td><td></td><td></td><td></td><td></td><td></td><td></td></tr>
                  <tr><td class="ind"></td><td>S</td><td></td><td></td><td></td><td></td><td></td><td></td></tr>
                  <tr><td class="ind"></td><td>S</td><td></td><td></td><td></td><td></td><td></td><td></td></tr>
                </tbody>
              </table>
            </div>
            <div class="gridfoot"><span class="count"></span></div>
            <div class="hsb main-h"><i class="lf"></i><span class="track"><b></b></span><i class="rt"></i></div>
          </div>
          <div class="vsb main-v"><i class="up"></i><span class="track"><b></b></span><i class="dn"></i></div>
        </section>
      </div>

      <section class="details">
        <div class="dtabs">
          <button type="button" class="w117"><svg class="i16"><use href="#clip"/></svg>Usługi</button>
          <button type="button" class="w170"><svg class="i16"><use href="#comp"/></svg>Komponenty</button>
          <span class="fill"></span>
          <button type="button" class="w152"><svg class="i16"><use href="#params"/></svg>Parametry</button>
          <button type="button" class="w146"><svg class="i16"><use href="#attach"/></svg>Załączniki</button>
          <button type="button" class="w132"><svg class="i16"><use href="#photo"/></svg>Zdjęcia</button>
        </div>
        <div class="dtabs second">
          <button type="button" class="w148 on"><svg class="i16"><use href="#cal31"/></svg>Kalendarz</button>
          <button type="button" class="w117" aria-label="Kafelki"><svg class="i16"><use href="#tiles"/></svg></button>
          <span class="fill"></span>
          <button type="button" class="w132"><svg class="i16"><use href="#meter"/></svg>Liczniki</button>
          <button type="button" class="w210"><svg class="i16"><use href="#read"/></svg>Odczyty liczników</button>
          <button type="button" class="w156"><svg class="i16"><use href="#ab"/></svg>Zamienniki</button>
        </div>
        <div class="dpanel">
          <div class="caltools">
            <button type="button" class="raised" disabled><svg class="i16"><use href="#editoff"/></svg>Edytuj</button>
            <button type="button" class="edge"><svg class="i16"><use href="#del"/></svg>Usuń</button>
            <button type="button">Awari</button><button type="button">Uster</button><button type="button">Przeg</button><button type="button">Pomia</button>
            <span class="fill"></span>
            <button type="button" class="odsw"><svg class="i16"><use href="#refresh"/></svg>Odśwież</button>
            <button type="button" class="raised uklad"><svg class="i16"><use href="#list"/></svg>Układ</button>
            <button type="button" class="raised drop" aria-label="Rozwiń układ"><i class="tri-dn dark"></i></button>
          </div>
          <div class="calrow">
            <div class="monthwrap">
            <table class="month">
              <thead><tr><th>PONIEDZIAŁEK</th><th>WTOREK</th><th>ŚRODA</th><th>CZWARTEK</th><th>PIĄTEK</th><th>SOBOTA/NIEDZIELA</th></tr></thead>
              <tbody>
                <tr><td class="dim">30 wrz</td><td>1 paź</td><td>2</td><td>3</td><td>4</td><td class="two"><p>5</p><p>6</p></td></tr>
                <tr><td>7</td><td>8</td><td>9</td><td>10</td><td>11</td><td class="two"><p>12</p><p>13</p></td></tr>
                <tr><td class="today">14</td><td>15</td><td>16</td><td>17</td><td>18</td><td class="two"><p>19</p><p>20</p></td></tr>
                <tr><td>21</td><td>22</td><td>23</td><td>24</td><td>25</td><td class="two"><p>26</p><p>27</p></td></tr>
                <tr><td>28</td><td>29</td><td>30</td><td>31</td><td class="dim"><b>1 lis</b></td><td class="two dim"><p>2</p><p>3</p></td></tr>
              </tbody>
            </table>
            </div>
            <div class="mini">
              <div class="minihead"><i class="tri-l"></i>październik 2024<i class="tri-r"></i></div>
              <table>
                <thead><tr><th></th><th>p</th><th>w</th><th>ś</th><th>c</th><th>p</th><th>s</th><th>n</th></tr></thead>
                <tbody>
                  <tr><th>40</th><td class="o">30</td><td>1</td><td>2</td><td>3</td><td>4</td><td>5</td><td>6</td></tr>
                  <tr><th>41</th><td>7</td><td>8</td><td>9</td><td>10</td><td>11</td><td>12</td><td>13</td></tr>
                  <tr><th>42</th><td class="now">14</td><td>15</td><td>16</td><td>17</td><td>18</td><td>19</td><td>20</td></tr>
                  <tr><th>43</th><td>21</td><td>22</td><td>23</td><td>24</td><td>25</td><td>26</td><td>27</td></tr>
                  <tr><th>44</th><td>28</td><td>29</td><td>30</td><td>31</td><td class="o">1</td><td class="o">2</td><td class="o">3</td></tr>
                  <tr class="plain"><th>45</th><td>4</td><td>5</td><td>6</td><td>7</td><td>8</td><td>9</td><td>10</td></tr>
                </tbody>
              </table>
              <div class="minirest"></div>
            </div>
          </div>
          <div class="legend">
            <span><i class="k1"></i>Inne</span><span><i class="k2"></i>Konserwacje</span><span><i class="k1"></i>Naprawa</span><span><i class="k3"></i>Naprawy</span><span><i class="k4"></i>Pomiary</span><span><i class="k5"></i>Przeglądy</span><span><i class="k6"></i>Remonty</span><span><i class="k1"></i>Usterka</span><span><i class="k7"></i>Zgłoszenia awarii</span><span><i class="k8"></i>Powiadomienia</span>
          </div>
        </div>
      </section>
      <button type="button" class="hidebar">UKRYJ SZCZEGÓŁY [F8]</button>
    </div>
  </main>
</div>

<footer class="status"><span>Copyright © 2005-2024 RHO Software</span><span>Modus demo v.5.0.0.473</span><span>Nr licencji: 2223/111111111111111</span><time>2024-10-14,&nbsp; 14:13:41</time></footer>

<section class="win win-edit" role="dialog" aria-label="Edycja obiektu">
  <div class="wintitle"><svg class="i16"><use href="#logo"/></svg>MODUS
    <div class="winbtns off"><button type="button" aria-label="Maksymalizuj"><svg viewBox="0 0 16 12"><path d="M4 2h9v8H4zM7 5h3v2H7z"/></svg></button><button type="button" aria-label="Zamknij"><svg viewBox="0 0 16 12"><path d="M3 1h3l2 3 2-3h3l-3 5 3 5h-3l-2-3-2 3H3l3-5z"/></svg></button></div>
  </div>
  <div class="winbody">
    <div class="band">· EDYCJA OBIEKTU ·<svg class="i20"><use href="#help"/></svg></div>
    <div class="form">
      <fieldset class="kinds">
        <label><input type="radio" name="kind" checked>Maszyna</label>
        <label><input type="radio" name="kind">Osprzęt</label>
        <label><input type="radio" name="kind">Narzędzie</label>
        <label><input type="radio" name="kind">Samochód</label>
        <label><input type="radio" name="kind">Przyczepa</label>
        <label><input type="radio" name="kind">Inne</label>
      </fieldset>
      <div class="fields">
        <label for="f1">Nazwa</label><input id="f1" class="big span3" type="text" value="CNC">
        <label for="f2">Kod</label><input id="f2" class="mid" type="text" value="CNC">
        <label for="f3">Kod kreskowy</label><input id="f3" type="text">
        <label for="f4">Typ</label><span class="lookup"><input id="f4" type="text"><svg class="i16"><use href="#lens"/></svg><svg class="i12"><use href="#redx"/></svg></span>
        <label for="f5">Linia produkcyjna</label><span class="lookup"><input id="f5" type="text" value="Linia 1"><svg class="i16"><use href="#lens"/></svg><svg class="i12"><use href="#redx"/></svg></span>
        <label for="f6">Grupa</label><span class="lookup"><input id="f6" type="text"><svg class="i16"><use href="#lens"/></svg><svg class="i12"><use href="#redx"/></svg></span>
        <label for="f7">Gniazdo produkcyjne</label><span class="lookup"><input id="f7" type="text" value="Stolarnia"><svg class="i16"><use href="#lens"/></svg><svg class="i12"><use href="#redx"/></svg></span>
        <label for="f8">Projekt</label><span class="lookup"><input id="f8" type="text"><svg class="i16"><use href="#lens"/></svg><svg class="i12"><use href="#redx"/></svg></span>
        <label for="f9">Priorytet</label><span class="prio"><input id="f9" type="text"><label class="chk"><input type="checkbox">Cięcie</label></span>
      </div>
    </div>
    <div class="etabs">
      <button type="button">Szczegóły</button><button type="button">Opis</button><button type="button" class="on">Czynności</button><button type="button">Specyfikacja</button><button type="button">Części</button><button type="button">Załączniki</button><button type="button">Zdjęcia</button><button type="button">Pracownicy</button><button type="button">Kalendarz</button>
    </div>
    <div class="epanel">
      <div class="etools"><svg class="i16"><use href="#plus"/></svg><svg class="i16"><use href="#del"/></svg><svg class="i16"><use href="#size"/></svg></div>
      <div class="ewhite">
        <table class="grid">
          <colgroup><col class="c-ind"><col class="c-100"><col><col class="c-100"><col class="c-100"><col class="c-100"><col class="c-55"></colgroup>
          <thead>
            <tr><th class="ind">⁕</th><th>Kod czynn...</th><th>Opis czynności</th><th>Rodzaj</th><th>Koszt wyko...</th><th>Czas wyko...</th><th>Pracown</th></tr>
            <tr class="filter"><td class="ind"><i class="pin"></i></td><td colspan="6">kliknij aby dodać filtr</td></tr>
          </thead>
          <tbody>
            <tr class="sel"><td class="ind">▸</td><td>NAP1</td><td>Naprawa</td><td>naprawa</td><td class="num">0,00</td><td class="num">1</td><td></td></tr>
            <tr><td class="ind"></td><td>Pomiar zbi...</td><td>Pomiar zbieżności</td><td>pomiar</td><td class="num">250,00</td><td class="num">5,53</td><td></td></tr>
            <tr><td class="ind"></td><td>Uszkodzeni...</td><td>Wymiana przekładni</td><td>naprawa</td><td class="num">150,00</td><td class="num">10</td><td>DT</td></tr>
          </tbody>
        </table>
      </div>
      <div class="eright"><svg class="i16"><use href="#list"/></svg></div>
    </div>
  </div>
</section>

<section class="win win-pick" role="dialog" aria-label="Czynności">
  <div class="wintitle"><svg class="i16"><use href="#logo"/></svg>MODUS
    <div class="winbtns"><button type="button" aria-label="Maksymalizuj"><svg viewBox="0 0 16 12"><path d="M4 2h9v8H4zM7 5h3v2H7z"/></svg></button><button type="button" class="close" aria-label="Zamknij"><svg viewBox="0 0 16 12"><path d="M3 1h3l2 3 2-3h3l-3 5 3 5h-3l-2-3-2 3H3l3-5z"/></svg></button></div>
  </div>
  <div class="winbody">
    <div class="caption">· CZYNNOŚCI ·</div>
    <div class="toolbar">
      <button class="tb" type="button"><svg class="i16"><use href="#plus"/></svg>Dodaj</button>
      <button class="tb" type="button"><svg class="i16"><use href="#edit"/></svg>Edytuj</button>
      <button class="tb" type="button"><svg class="i16"><use href="#clone"/></svg>Klonuj</button>
      <button class="tb" type="button"><svg class="i16"><use href="#del"/></svg>Usuń</button>
      <span class="sep"></span>
      <input class="find" type="text" aria-label="Szukaj czynności">
      <svg class="i16"><use href="#gear"/></svg>
      <input class="box" type="checkbox" aria-label="Szukanie zaawansowane">
      <span class="sep"></span>
      <span class="tbright"><svg class="i16"><use href="#sync"/></svg><svg class="i16"><use href="#list"/></svg><svg class="i16"><use href="#size"/></svg></span>
    </div>
    <div class="pickfilter">
      <label class="chk"><input type="checkbox" checked>Tylko aktywne</label>
      <label class="objlabel" for="obj">Obiekt</label>
      <span class="lookup"><input id="obj" type="text"><svg class="i16"><use href="#lensred"/></svg><svg class="i12"><use href="#redx"/></svg></span>
    </div>
    <div class="pickwork">
      <ul class="tree">
        <li class="root">WSZYSTKIE</li>
        <li class="root open picked"><span>RODZAJE CZYNNOŚCI (7)</span></li>
        <li class="kid bare">naprawa</li><li class="kid bare">przegląd</li><li class="kid bare">remont</li><li class="kid bare">konserwacja</li><li class="kid bare">awaria</li><li class="kid bare">pomiar</li><li class="kid bare last">inne</li>
        <li class="root end">GRUPY CZYNNOŚCI</li>
      </ul>
      <div class="splitv inner"></div>
      <div class="gridbox">
        <div class="gridcol">
          <div class="grouppanel">Panel grupowania</div>
          <div class="gridclip">
            <table class="grid">
              <colgroup><col class="c-ind"><col class="c-20"><col class="c-100"><col><col class="c-100"><col class="c-58"></colgroup>
              <thead>
                <tr><th class="ind">⁕</th><th></th><th>Rodzaj</th><th>Czynność</th><th>Priorytet</th><th>Nieaktywn</th></tr>
                <tr class="filter"><td class="ind"><i class="pin"></i></td><td colspan="5">kliknij aby dodać filtr</td></tr>
              </thead>
              <tbody>
                <tr><td class="ind"></td><td><input class="box" type="checkbox" checked aria-label="Przegląd miesięczny"></td><td>Przegląd</td><td>Przegląd miesięczny</td><td></td><td></td></tr>
                <tr><td class="ind"></td><td><input class="box" type="checkbox" checked aria-label="Naprawa"></td><td>Naprawa</td><td>Naprawa</td><td></td><td></td></tr>
                <tr class="focus"><td class="ind">▸</td><td><input class="box" type="checkbox" checked aria-label="Przegląd roczny"></td><td>Przegląd</td><td>Przegląd roczny</td><td></td><td></td></tr>
              </tbody>
            </table>
          </div>
          <div class="gridfoot"><span class="count">14 rekordó</span></div>
          <div class="hsb pick-h"><i class="lf"></i><span class="track"><b></b></span><i class="rt"></i></div>
        </div>
        <div class="vsb pick-v"><i class="up"></i><span class="track"><b></b></span><i class="dn"></i></div>
      </div>
    </div>
    <div class="pickfoot">
      <button type="button" class="choose"><svg class="i16"><use href="#pick"/></svg>Wybierz</button>
      <button type="button" class="cancel"><svg class="i16"><use href="#cancel"/></svg>Anuluj</button>
    </div>
  </div>
</section>

<div class="marks" aria-hidden="true">
  <i class="box-m m-obj"></i><i class="box-m m-edit"></i><i class="box-m m-row"></i><i class="box-m m-tab"></i><i class="box-m m-plus"></i><i class="box-m m-tree"></i><i class="box-m m-checks"></i>
  <svg class="arrow" viewBox="0 0 120 284"><path d="M112 4 L47 188 L17 258 L24 262 L4 282 L2 253 L8 255 L36 184 Z" fill="red"/></svg>
  <b class="n n1">1</b><b class="n n2">2</b><b class="n n3">3</b><b class="n n4">4</b><b class="n n5">5</b><b class="n n6">6</b>
</div>
</body>
</html>
```
FILE: styles.css
```css
:root {
  --bg: #bcc7d7;
  --line: #98a4ba;
  --ink: #1f2c44;
  --soft: #5a6678;
  --yellow: #ffe5a3;
  --bar: linear-gradient(#ecf0f4, #e0e4eb 48%, #d8dce6 52%, #d9dde7);
}
* { box-sizing: border-box; }
body {
  margin: 0;
  height: 100vh;
  display: flex;
  flex-direction: column;
  position: relative;
  overflow: hidden;
  background: var(--bg);
  color: var(--ink);
  font: 11px/14px "DejaVu Sans Condensed", "Noto Sans", sans-serif;
}
button, input, select { font: inherit; color: inherit; margin: 0; }
button { background: none; border: 0; padding: 0; white-space: nowrap; }
input[type="text"] { border: 1px solid var(--line); background: #fff; padding: 0 2px; min-width: 0; outline: 0; border-radius: 0; }
a { color: inherit; text-decoration: none; }
svg { flex: none; fill: none; display: block; }
.defs { position: absolute; width: 0; height: 0; }
.i20 { width: 20px; height: 20px; }
.i16 { width: 16px; height: 16px; }
.i14 { width: 14px; height: 14px; }
.i12 { width: 12px; height: 12px; }
.fill { flex: 1; }

/* window chrome */
.titlebar { height: 23px; flex: none; display: flex; align-items: center; gap: 4px; padding: 0 1px 2px 2px; background: linear-gradient(#c7cdda, #dce0e9); color: #5d6e84; }
.titlebar h1 { margin: 0; font-size: 12px; font-weight: 400; }
.winbtns { margin-left: auto; display: flex; gap: 3px; }
.winbtns button { width: 31px; height: 16px; border: 1px solid #4f6384; border-radius: 2px; background: linear-gradient(#e2eaf2, #b4c6d8 50%, #98adc6 52%, #b4c8dc); display: grid; place-items: center; }
.winbtns svg { width: 16px; height: 12px; fill: #fff; stroke: #39475f; fill-rule: evenodd; }
.winbtns.off button { border-color: #98a4ba; background: linear-gradient(#dce2ec, #cdd5e2); }
.winbtns.off svg { stroke: #8c97ab; }
.winbtns .close { border-color: #4a0f18; background: linear-gradient(#e8a79c, #cf6454 50%, #b6402c 52%, #cf6a54); }
.menubar { height: 19px; flex: none; display: grid; grid-template-columns: 1fr 80px 67px repeat(7, 1fr) 93px; background: var(--bar); border-bottom: 2px solid #9c9fa4; color: var(--soft); }
.menubar a { display: flex; align-items: center; padding-left: 5px; border-right: 1px solid #e6e9ef; }
.menuicons { display: flex; align-items: center; justify-content: space-around; }

.app { flex: 1; min-height: 0; display: flex; border-top: 1px solid #fff; }
.status { height: 18px; flex: none; display: grid; grid-template-columns: 593px 593px 1fr auto; background: var(--bar); color: var(--soft); line-height: 19px; padding: 0 5px 0 4px; }

/* sidebar */
.sidebar { width: 185px; flex: none; display: flex; flex-direction: column; }
.sidesearch { height: 20px; margin: 0 1px 0; }
.todo { margin: 2px 2px; height: 21px; background: #ffff78; font-size: 15px; line-height: 24px; text-align: center; overflow: hidden; }
.navwrap { flex: 1; min-height: 0; display: flex; }
.nav { flex: 1; min-height: 0; overflow: hidden; background: #2b3a59; display: flex; flex-direction: column; gap: 2px; padding: 0 12px; }
.nav > * { flex: none; }
.navcut { height: 7px; background: #42557a; }
.navhead { height: 25px; display: flex; align-items: center; gap: 5px; padding: 0 8px 0 11px; background: linear-gradient(#465a80, #4a5e84 49%, #3f5177 51%, #42547a); color: #fff; font-weight: 700; text-shadow: 1px 1px #2a3752; white-space: nowrap; }
.chev { width: 10px; height: 10px; margin-left: auto; }
.navbody { padding: 7px 0; background: radial-gradient(#36466a 1px, transparent 1px) 0 0 / 4px 4px #2b3a59; color: #f2f4f8; }
.navbody a { height: 28px; display: flex; align-items: center; gap: 8px; padding-left: 14px; white-space: nowrap; }
.sidechk { height: 19px; padding-left: 2px; }
.chk { display: flex; align-items: center; gap: 3px; white-space: nowrap; }
input[type="checkbox"] { appearance: none; width: 15px; height: 15px; flex: none; border: 1px solid var(--line); background: linear-gradient(#f4f6f8, #ccd2de); display: grid; place-items: center; }
input[type="checkbox"]:checked::before { content: ""; width: 11px; height: 11px; background: #10141c; clip-path: polygon(0 50%, 20% 42%, 38% 66%, 84% 0, 100% 0, 45% 100%, 32% 100%); }

/* scroll bars */
.vsb { width: 17px; flex: none; background: #e8e8ea; display: flex; flex-direction: column; align-items: center; border: solid #f4f4f6; border-width: 0 1px; }
.hsb { height: 17px; flex: none; background: #e8e8ea; display: flex; align-items: center; border: solid #f4f4f6; border-width: 1px 0; }
.vsb i, .hsb i { width: 16px; height: 16px; display: grid; place-items: center; flex: none; }
.vsb i::before, .hsb i::before { content: ""; border: 3px solid transparent; }
.vsb .up::before { border-bottom: 4px solid #7d8597; border-top: 0; }
.vsb .dn::before { border-top: 4px solid #7d8597; border-bottom: 0; }
.hsb .lf::before { border-right: 4px solid #7d8597; border-left: 0; }
.hsb .rt::before { border-left: 4px solid #7d8597; border-right: 0; }
.track { flex: 1; display: flex; min-height: 0; min-width: 0; }
.vsb .track { flex-direction: column; width: 15px; }
.hsb .track { height: 15px; }
.track b { border: 1px solid #a3abb9; border-radius: 2px; display: grid; place-items: center; }
.vsb .track b { background: linear-gradient(90deg, #f2f4f7, #dde1e9 50%, #cdd3e0); }
.hsb .track b { background: linear-gradient(#f2f4f7, #dde1e9 50%, #cdd3e0); }
.vsb b::before { content: ""; width: 7px; height: 8px; background: repeating-linear-gradient(#5d6880 0 2px, transparent 2px 3px); }
.hsb b::before { content: ""; width: 8px; height: 7px; background: repeating-linear-gradient(90deg, #5d6880 0 2px, transparent 2px 3px); }
.nav-sb .track::before { content: ""; flex: 550; }
.nav-sb .track b { flex: 203; }
.nav-sb .track::after { content: ""; flex: 129; }
.main-v b { height: 371px; }
.main-h b { width: 900px; }
.pick-v b { height: 35px; }
.pick-h b { width: 387px; }

/* splitters */
.splitv { width: 6px; flex: none; display: grid; place-items: center; }
.splitv::before { content: ""; width: 2px; height: 14px; background: repeating-linear-gradient(#8090b0 0 2px, transparent 2px 4px); }

/* document */
.main { flex: 1; min-width: 0; display: flex; flex-direction: column; }
.doctabs { height: 27px; flex: none; display: flex; padding-left: 4px; }
.doctab { width: 102px; height: 27px; border: 1px solid var(--line); border-bottom: 0; border-radius: 3px 3px 0 0; background: linear-gradient(#fff9ea, #fff2cf 55%, #ffe6a8 60%); display: flex; align-items: center; justify-content: space-between; padding: 2px 10px 0 12px; white-space: nowrap; }
.doctab b { color: #5c6677; font-size: 11px; }
.docctl { margin-left: auto; display: flex; gap: 14px; padding: 1px 6px 0 0; color: #8794ae; }
.tri-dn { border: 5px solid transparent; border-top-color: #8794ae; border-bottom: 0; height: 0; margin-top: 5px; }
.tri-dn.dark { border: 4px solid transparent; border-top-color: #10182a; border-bottom: 0; margin: 0; }
.doc { flex: 1; min-height: 0; display: flex; flex-direction: column; border: 1px solid var(--line); border-bottom-color: #8c96a6; box-shadow: inset 0 4px var(--yellow), inset 0 -4px var(--yellow); padding: 4px 0; }

.toolbar { height: 39px; flex: none; display: flex; align-items: center; }
.doc > .toolbar { padding-left: 1px; }
.tb { width: 38px; flex: none; display: flex; flex-direction: column; align-items: center; gap: 3px; font-size: 10px; line-height: 13px; }
.tb.wide { width: 62px; font-size: 11px; }
.tb:hover { background: #dfe5ee; }
.toolbar .chk { margin-left: 3px; }
.sep { width: 1px; height: 32px; background: #a2afc2; margin: 0 4px 0 7px; }
.find { width: 132px; height: 30px; }
.toolbar .find + svg { margin: 0 5px 0 4px; }
.toolbar .box + .sep { margin-left: 5px; }
.tbright { margin-left: auto; display: flex; gap: 18px; padding-right: 11px; }

.work { flex: 1; min-height: 0; display: flex; padding-left: 2px; }
.treepanel { width: 184px; flex: none; border: 2px solid var(--line); border-radius: 2px; display: flex; flex-direction: column; }
.treehead { height: 25px; flex: none; border-bottom: 2px solid var(--line); display: flex; align-items: center; justify-content: flex-end; padding-right: 3px; }
.tree { list-style: none; margin: 0; padding: 0; }
.tree li { height: 19px; background: #f6f8fa; display: flex; align-items: center; white-space: nowrap; position: relative; }
.tree li:nth-child(even) { background: #ebf6ed; }
.tree .root { padding-left: 21px; font-weight: 700; }
.tree .kid { padding-left: 40px; gap: 4px; }
.tree li::before { content: ""; position: absolute; left: 9px; top: 0; bottom: 0; border-left: 1px dotted #aab3c4; }
.tree li:first-child::before { top: 9px; }
.tree .end::before { bottom: 9px; }
.tree .solo::before { left: 28px; }
.tree .solo.last::before { bottom: 9px; }
.tree .root::after { content: ""; position: absolute; left: 9px; top: 9px; width: 9px; border-top: 1px dotted #aab3c4; }
.tree .kid::after { content: ""; position: absolute; left: 28px; top: 0; width: 9px; height: 10px; border: dotted #aab3c4; border-width: 0 0 1px 1px; }
.tree .open::after { left: 7px; top: 6px; width: 0; height: 0; border: 0 solid transparent; border-bottom: 6px solid #39455c; border-left: 6px solid transparent; }
.tree .shut::after { left: 7px; top: 5px; width: 0; height: 0; border: 4px solid transparent; border-left: 5px solid #39455c; border-right: 0; }

.gridbox { flex: 1; min-width: 0; display: flex; }
.gridcol { flex: 1; min-width: 0; display: flex; flex-direction: column; }
.grouppanel { height: 41px; flex: none; background: #c9d1e3; color: #9aa5bb; font-size: 15px; line-height: 42px; padding-left: 8px; border-bottom: 1px solid #a9b4cb; }
.gridclip { flex: 1; min-height: 0; overflow: hidden; background: #ebf6ed; }
.grid { width: 100%; table-layout: fixed; border-collapse: separate; border-spacing: 0; font-size: 15px; line-height: 22px; }
.grid th, .grid td { padding: 0 0 0 2px; height: 23px; white-space: nowrap; overflow: hidden; text-align: left; font-weight: 400; }
.grid th { height: 25px; background: var(--bar); color: var(--soft); border-right: 1px solid #d0d5e0; }
.grid .ind { padding: 0; text-align: center; font-size: 11px; background: linear-gradient(#e9edf2 48%, #d8dce6 52%); border-right: 1px solid #e6e9ef; color: #111a2c; }
.pin { display: inline-block; width: 5px; height: 9px; background: radial-gradient(circle at 50% 2px, transparent 1px, #111a2c 1px 3px, transparent 3px) no-repeat, linear-gradient(#111a2c, #111a2c) center bottom / 1px 5px no-repeat; }
.grid tbody tr { background: #f6f8fa; }
.grid tbody tr:nth-child(even) { background: #ebf6ed; }
.grid .filter td { height: 25px; background-color: #ebf6ed; border-bottom: 2px solid #b4bed0; color: #747a80; text-align: center; }
.grid tbody .sel { background: #fff3da; }
.grid .num { text-align: right; }
.grid tbody .focus { background: #ffe4a0; }
.focus td:not(.ind) { border: dotted #111; border-width: 1px 0; }
.grid .box { vertical-align: middle; display: inline-grid; }
.sort { float: right; margin: 9px 6px 0 0; border: 5px solid transparent; border-bottom: 5px solid #9aa3b3; border-top: 0; }
.c-ind { width: 12px; } .c-kod { width: 186px; } .c-100 { width: 100px; } .c-400 { width: 400px; } .c-70 { width: 70px; } .c-58 { width: 58px; } .c-55 { width: 55px; } .c-20 { width: 20px; }
.gridfoot { height: 39px; flex: none; background: var(--bar); border-top: 1px solid #aab5ca; padding: 3px 0 3px 14px; }
.count { display: block; width: 96px; height: 32px; border: 1px solid #bcc4d2; border-radius: 2px; background: #fff; font-size: 15px; line-height: 31px; padding-left: 12px; overflow: hidden; white-space: nowrap; }
.work .vsb { margin-bottom: 17px; }

/* details */
.details { flex: none; padding: 8px 3px 0 2px; }
.dtabs { display: flex; gap: 2px; padding: 0 2px 0 3px; height: 24px; }
.dtabs.second { height: 25px; margin-top: 2px; }
.dtabs button, .dtabs .fill { border: 1px solid var(--line); border-bottom: 0; border-radius: 2px 2px 0 0; background: linear-gradient(#e9ecf1, #dfe3ea 48%, #cfd4e0 52%); display: flex; align-items: center; justify-content: center; gap: 6px; }
.dtabs .on { background: linear-gradient(#fffaf0, #fff3d4 50%, #ffe6a6 56%); }
.w117 { width: 117px; } .w132 { width: 132px; } .w146 { width: 146px; } .w148 { width: 148px; } .w152 { width: 152px; } .w156 { width: 156px; } .w170 { width: 170px; } .w210 { width: 210px; }
.dpanel { border: 1px solid var(--line); box-shadow: inset 0 4px var(--yellow), inset 0 -4px var(--yellow); padding: 5px 0; }
.caltools { display: flex; align-items: center; height: 44px; border: 1px solid var(--line); border-bottom: 3px solid var(--line); }
.caltools button { width: 39px; display: flex; flex-direction: column; align-items: center; gap: 2px; line-height: 16px; height: 38px; justify-content: center; }
.caltools .raised { width: 35px; border: 1px solid #9aa5b8; border-radius: 2px; background: linear-gradient(#e8ebf1, #dadee8); }
.caltools .edge { width: 34px; border-right: 1px solid #eef1f5; }
.caltools button:disabled { color: #959daa; }
.caltools .odsw { width: 50px; }
.caltools .uklad { width: 41px; border-radius: 2px 0 0 2px; }
.caltools .drop { width: 17px; }
.calrow { display: flex; height: 137px; overflow: hidden; padding: 0 1px 0 2px; }
.monthwrap { flex: 1; min-width: 0; overflow: hidden; }
.month { width: 100%; table-layout: fixed; border-collapse: separate; border-spacing: 0; height: 137px; }
.month th { height: 18px; padding: 2px 0 0 6px; text-align: left; font-weight: 400; color: var(--soft); background: var(--bar); line-height: 14px; }
.month td { background: #fff; padding: 0 0 0 6px; vertical-align: top; line-height: 18px; border-bottom: 1px solid #dcdcde; border-right: 1px solid #dcdcde; height: 24px; }
.month td.dim { background: #efefef; }
.month td.today { background: linear-gradient(#ffd08c 76%, #ffe4a0 76%); font-weight: 700; }
.month td.two { padding: 0; border-bottom: 0; }
.two p { margin: 0; height: 12px; overflow: hidden; padding-left: 6px; line-height: 14px; border-bottom: 1px solid #dcdcde; }
.mini { width: 148px; flex: none; border: solid var(--line); border-width: 0 1px 0 2px; padding: 0 1px 0 3px; display: flex; flex-direction: column; gap: 4px; }
.minihead { height: 18px; background: var(--bar); display: flex; align-items: center; justify-content: space-between; padding: 0 6px; color: var(--soft); margin-bottom: -4px; }
.tri-l, .tri-r { border: 4px solid transparent; }
.tri-l { border-right: 5px solid #1b2537; border-left: 0; }
.tri-r { border-left: 5px solid #1b2537; border-right: 0; }
.mini table { background: #fff; border-spacing: 0; table-layout: fixed; width: 100%; padding-right: 9px; border-bottom: 1px solid var(--line); }
.mini th, .mini td { padding: 0 2px 0 0; height: 15px; line-height: 13px; text-align: right; font-weight: 400; }
.mini thead th { text-align: center; padding: 0; border-bottom: 1px solid #222; line-height: 14px; }
.mini thead th:first-child { width: 13px; border: 0; }
.mini tbody th { font-size: 8px; color: var(--soft); border-right: 1px solid #222; padding: 0 1px 0 0; }
.mini td { background: #ffeab4; border: 1px solid #f0d48c; }
.mini .o { color: #857a60; }
.mini .now { border-color: #b98c2c; background: #ffd98c; }
.mini .plain td { background: #fff; border-color: #fff; color: #6b7280; }
.minirest { flex: 1; background: #f2f2f4; border: 2px solid var(--line); border-width: 2px 1px 0; }
.legend { display: flex; height: 30px; overflow: hidden; border: 1px solid var(--line); padding: 0 0 0 2px; }
.legend span { width: 185px; flex: none; display: flex; gap: 3px; line-height: 18px; }
.legend i { width: 31px; height: 21px; margin-top: 1px; border: 1px solid #98a0ac; box-shadow: inset 0 0 0 1px #dde1e8, inset 0 0 0 2px #98a0ac; }
.k1 { background: #c4a4f4; } .k2 { background: #808000; } .k3 { background: #80ffff; } .k4 { background: #b08090; } .k5 { background: #00ff80; } .k6 { background: #ff8000; } .k7 { background: #ffff00; } .k8 { background: #c0c0c0; }
.hidebar { height: 24px; flex: none; letter-spacing: 2px; display: flex; flex-direction: column; align-items: center; gap: 4px; padding-top: 2px; line-height: 14px; }
.hidebar::before { content: ""; width: 14px; height: 2px; background: repeating-linear-gradient(90deg, #8090b0 0 2px, transparent 2px 4px); }

/* floating windows */
.win { position: absolute; display: flex; flex-direction: column; background: #c9cfdd; z-index: 5; }
.win .wintitle { flex: none; display: flex; align-items: center; gap: 4px; font-size: 12px; }
.winbody { flex: 1; min-height: 0; background: var(--bg); display: flex; flex-direction: column; }
.win-edit { left: 841px; top: 57px; width: 885px; height: 457px; border: 4px solid #f00; border-radius: 8px; padding: 0 6px 7px; background: #d3d8e2; box-shadow: 0 1px 5px #0008, inset 0 0 6px #0006; }
.win-edit .wintitle { height: 28px; background: linear-gradient(#bdc4d3, #dde1ea); color: #66758b; margin: 0 -6px; padding: 0 6px 0 8px; }
.band { height: 29px; flex: none; background: #eeeff3; border: 1px solid var(--line); display: flex; align-items: center; justify-content: space-between; padding: 0 8px 0 5px; color: #101010; }
.form { display: flex; padding: 6px 0 14px 10px; }
.kinds { width: 101px; margin: 0; border: 1px solid var(--line); border-radius: 2px; height: 108px; padding: 13px 0 0 9px; margin-top: -1px; }
.kinds label { display: flex; align-items: center; gap: 4px; height: 15px; }
input[type="radio"] { appearance: none; width: 15px; height: 15px; flex: none; border: 1px solid #a9b4c4; border-radius: 50%; background: linear-gradient(#f8f9fb, #d2d7e1); display: grid; place-items: center; }
input[type="radio"]:checked::before { content: ""; width: 7px; height: 7px; border-radius: 50%; background: #7488b4; border: 1px solid #52679a; }
.fields { display: grid; grid-template-columns: 43px 197px 98px 199px; grid-template-rows: 28px 23px 18px 18px 18px; gap: 3px; }
.fields > label { text-align: right; align-self: center; white-space: nowrap; justify-self: end; }
.fields .span3 { grid-column: 2 / 5; margin-right: -6px; }
.fields .big { font-size: 18px; }
.fields .mid { font-size: 14px; }
.lookup { display: flex; align-items: center; border: 1px solid var(--line); padding-right: 4px; gap: 6px; }
.lookup input[type="text"] { flex: 1; border: 0; background: none; padding: 0; height: 16px; }
.prio { display: flex; justify-content: space-between; padding-right: 1px; }
.prio input[type="text"] { width: 49px; height: 20px; }
.etabs { display: grid; grid-template-columns: 65px 36px 70px 74px 47px 63px 51px 70px 64px; gap: 2px; padding-left: 10px; height: 25px; flex: none; }
.etabs button { border: 1px solid var(--line); border-bottom: 0; border-radius: 2px 2px 0 0; background: linear-gradient(#eff1f5, #e2e5ec 48%, #cfd4e0 52%); }
.etabs .on { background: linear-gradient(#fff3cf, #ffe9b4 50%, #f6d88c 54%); }
.epanel { flex: 1; min-height: 0; display: flex; margin: 0 6px; border: 1px solid var(--line); border-bottom: 0; box-shadow: inset 0 4px var(--yellow); padding-top: 14px; }
.etools { width: 42px; display: flex; flex-direction: column; align-items: center; gap: 13px; padding: 6px 0 0 10px; }
.ewhite { flex: 1; min-width: 0; background: #fff; overflow: hidden; }
.eright { width: 42px; padding: 6px 0 0 8px; }

.win-pick { left: 404px; top: 529px; width: 1054px; height: 386px; border: 1px solid #1c2a44; padding: 0 7px 7px; background: #c6cddc; box-shadow: inset 0 0 0 1px #e4e9f2; }
.win-pick .wintitle { height: 29px; margin: 1px -6px 0; padding: 0 6px 0 8px; background: linear-gradient(#a2aec6, #c3cad9); }
.caption { width: 84px; height: 17px; flex: none; margin: 3px 0 0 1px; border: 1px solid var(--line); text-align: center; line-height: 15px; white-space: nowrap; }
.win-pick .toolbar { height: 41px; }
.win-pick .toolbar .sep { margin-left: 5px; }
.win-pick .tbright { gap: 17px; }
.pickfilter { height: 25px; flex: none; display: flex; align-items: center; padding: 0 0 3px 9px; }
.pickfilter .objlabel { margin-left: 54px; width: 39px; height: 17px; border: 1px solid var(--line); text-align: center; }
.pickfilter .lookup { margin-left: 9px; width: 310px; height: 18px; }
.pickwork { flex: 1; min-height: 0; display: flex; }
.pickwork .tree { width: 225px; flex: none; border: 2px solid var(--line); }
.pickwork .tree .root span { background: #f00; color: #fff; flex: 1; align-self: stretch; line-height: 19px; margin-left: -2px; padding-left: 2px; }
.pickwork .kid { padding-left: 39px; }
.pickwork .gridfoot { padding-left: 33px; }
.pickwork .vsb { margin-bottom: 17px; }
.pickfoot { height: 41px; flex: none; border: 1px solid var(--line); display: flex; align-items: center; justify-content: flex-end; gap: 29px; padding-right: 37px; }
.pickfoot button { display: flex; align-items: center; justify-content: center; gap: 4px; height: 30px; }
.choose { width: 100px; border: 1px solid #9c9a86; border-radius: 2px; background: linear-gradient(#fffdf4, #fff3d0 48%, #ffe39c 54%); }

/* numbered marks drawn over the screen */
.marks { position: absolute; inset: 0; z-index: 9; pointer-events: none; overflow: hidden; }
.box-m { position: absolute; border: 4px solid #f00; border-radius: 7px; box-shadow: 1px 2px 4px #0006, inset 1px 2px 5px #0005; }
.m-obj { left: 5px; top: 153px; width: 143px; height: 30px; }
.m-edit { left: 229px; top: 75px; width: 42px; height: 41px; }
.m-row { left: 381px; top: 203px; width: 464px; height: 28px; }
.m-tab { left: 963px; top: 253px; width: 74px; height: 29px; }
.m-plus { left: 865px; top: 293px; width: 40px; height: 35px; }
.m-tree { left: 414px; top: 645px; width: 222px; height: 199px; }
.m-checks { left: 648px; top: 734px; width: 120px; height: 79px; }
.arrow { position: absolute; left: 768px; top: 332px; width: 120px; height: 284px; filter: drop-shadow(2px 2px 2px #0006); }
.n { position: absolute; width: 30px; height: 30px; border-radius: 50%; border: 2px solid #f00; background: #db2f35ee; color: #fff; text-align: center; font: 15px/26px "DejaVu Sans Condensed", "Noto Sans", sans-serif; box-shadow: 1px 2px 4px #0006; }
.n1 { left: 364px; top: 201px; } .n2 { left: 257px; top: 103px; } .n3 { left: 998px; top: 85px; } .n4 { left: 1021px; top: 239px; } .n5 { left: 889px; top: 312px; } .n6 { left: 649px; top: 707px; }
```
